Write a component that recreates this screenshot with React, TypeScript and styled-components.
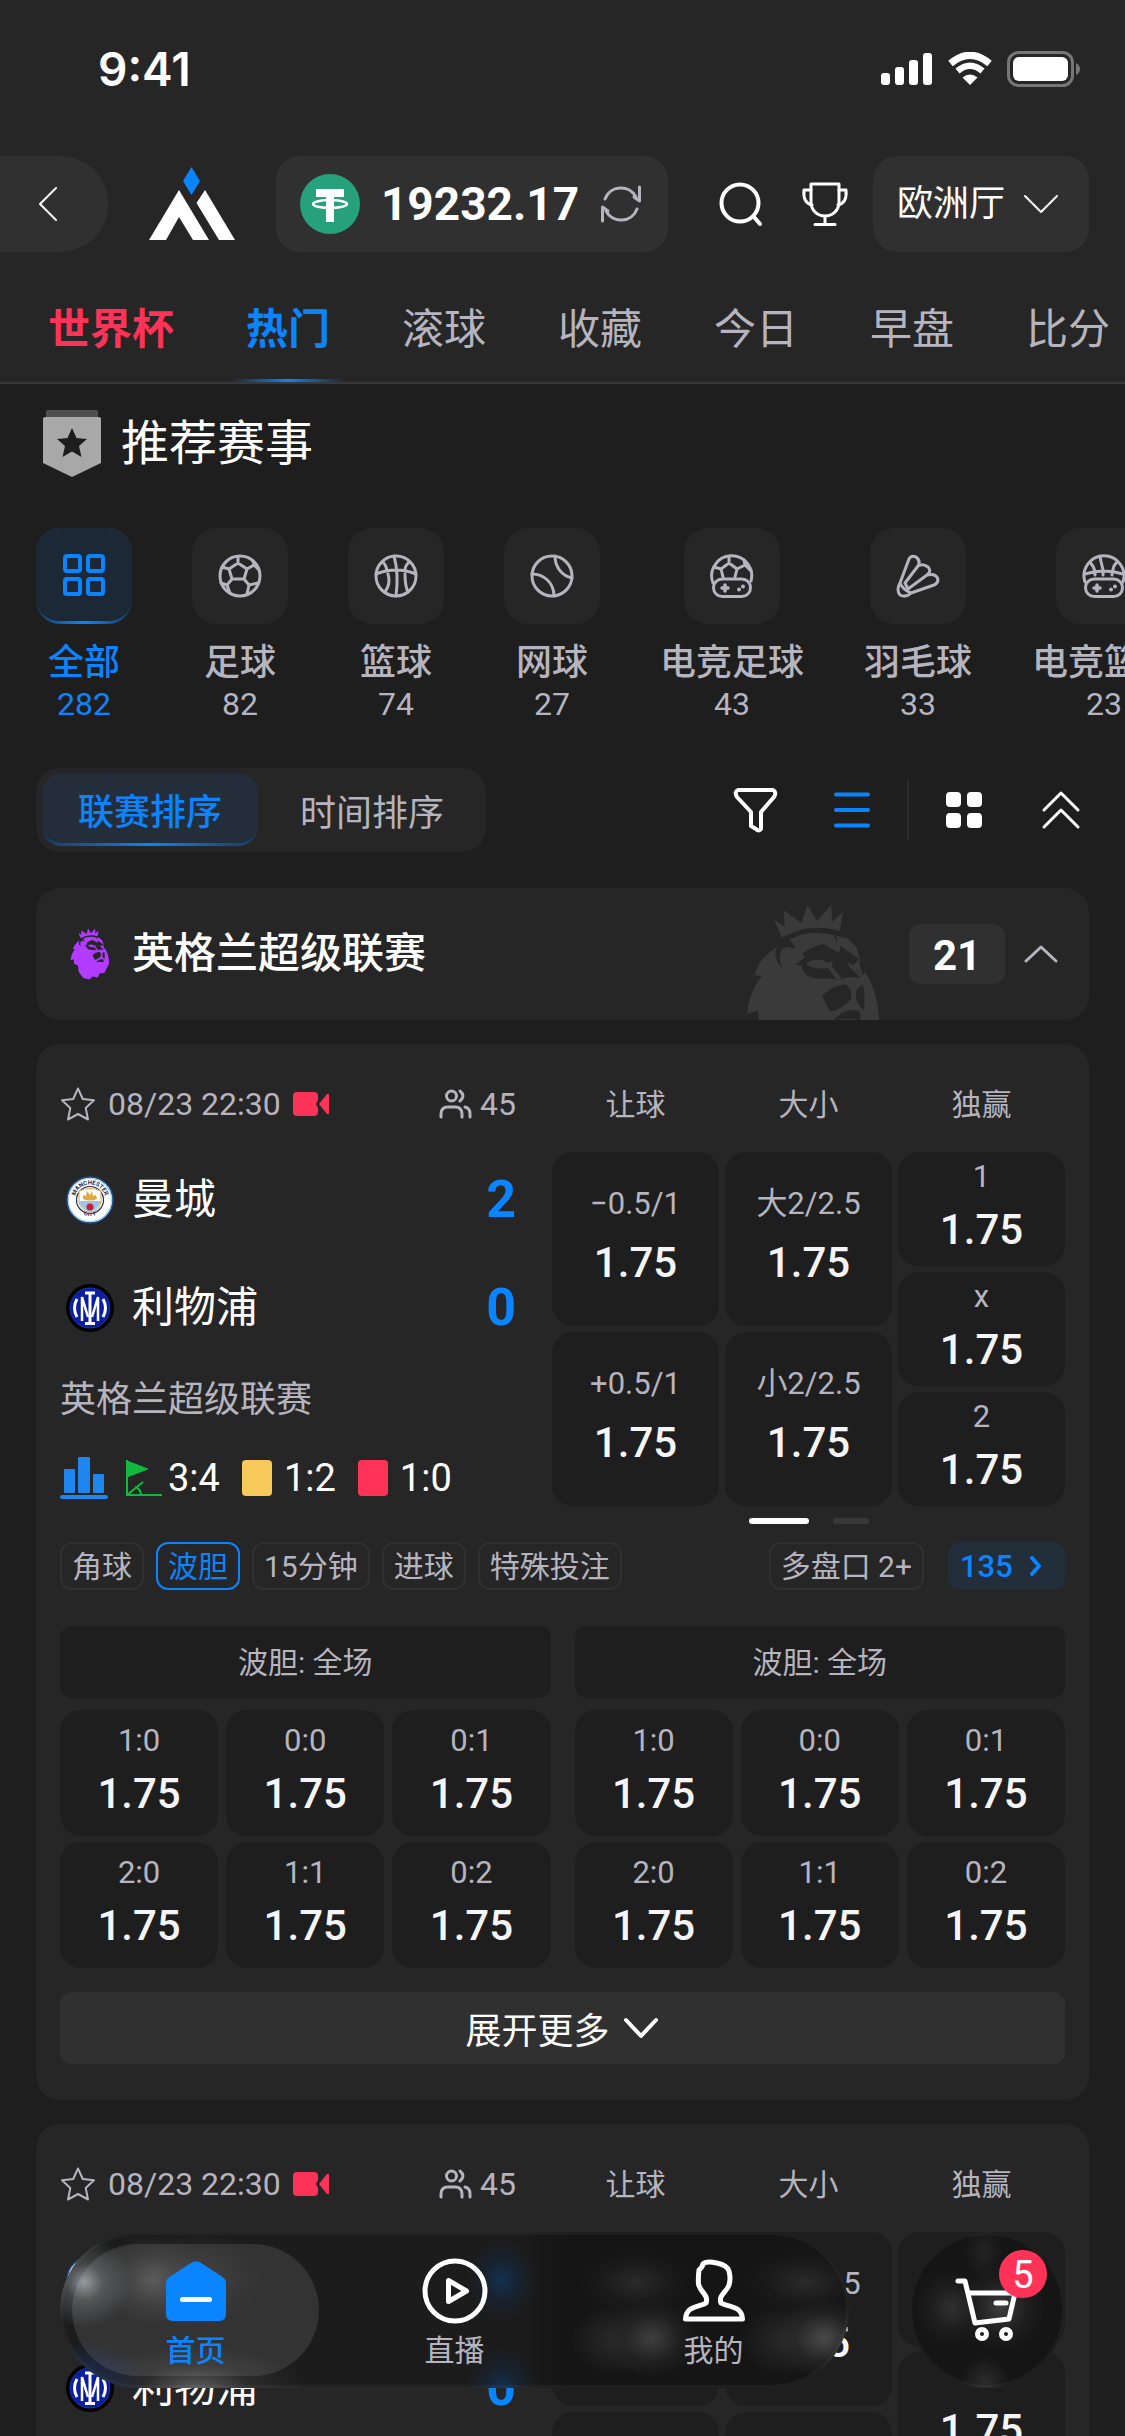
import React, { useState } from "react";
import styled, { createGlobalStyle, css } from "styled-components";

const c = {
  page: "#1e1e1e",
  panel: "#262626",
  raised: "#303030",
  text: "#ffffff",
  value: "#f5f5f7",
  muted: "#b5b4bf",
  blue: "#0a84ff",
  blueTint: "#232e3b",
  red: "#ff3358",
};

const GlobalStyle = createGlobalStyle`
  *, *::before, *::after { box-sizing: border-box; }
  body {
    margin: 0;
    background: ${c.page};
    color: ${c.text};
    font-family: Roboto, "Noto Sans CJK SC", sans-serif;
    font-size: 30px;
  }
  button, select {
    margin: 0;
    padding: 0;
    border: 0;
    background: none;
    color: inherit;
    font: inherit;
    cursor: pointer;
    appearance: none;
  }
  h1, h2, p { margin: 0; }
  svg { display: block; flex: none; }
`;

/* ---------- shell ---------- */

const Shell = styled.div`
  position: relative;
  display: flex;
  flex-direction: column;
  height: 100vh;
  overflow: hidden;
`;

const Header = styled.header`
  flex: none;
  background: ${c.panel};
  border-bottom: 2px solid #383838;
`;

const StatusBar = styled.div`
  display: flex;
  align-items: center;
  justify-content: space-between;
  height: 156px;
  padding: 0 44px 18px 98px;
`;

const Clock = styled.time`
  font-family: Inter, Roboto, sans-serif;
  font-size: 46px;
  font-weight: 600;
`;

const StatusIcons = styled.div`
  display: flex;
  align-items: center;
  gap: 14px;
`;

const TopBar = styled.div`
  display: flex;
  align-items: center;
  height: 96px;
  padding-right: 36px;
`;

const BackButton = styled.button`
  display: flex;
  align-items: center;
  width: 108px;
  height: 96px;
  padding-left: 38px;
  border-radius: 0 48px 48px 0;
  background: ${c.raised};
`;

const LogoLink = styled.a`
  margin: 0 41px;
`;

const Balance = styled.div`
  display: flex;
  align-items: center;
  justify-content: space-between;
  width: 392px;
  height: 96px;
  padding: 0 26px 0 24px;
  border-radius: 24px;
  background: ${c.raised};
  font-size: 46px;
  font-weight: 700;
`;

const Actions = styled.div`
  display: flex;
  align-items: center;
  gap: 36px;
  margin: 0 24px 0 auto;
`;

const IconButton = styled.button<{ $wide?: boolean }>`
  display: grid;
  place-items: center;
  width: ${(p) => (p.$wide ? 84 : 48)}px;
  height: 60px;
`;

const HallPicker = styled.label`
  display: flex;
  align-items: center;
  justify-content: space-between;
  width: 216px;
  height: 96px;
  padding: 0 30px 0 24px;
  border-radius: 24px;
  background: ${c.raised};

  select {
    font-size: 36px;
    color: ${c.text};
    outline: none;
  }
`;

const Tabs = styled.nav`
  display: flex;
  gap: 72px;
  height: 130px;
  padding-left: 48px;
  overflow: hidden;
`;

const Tab = styled.button<{ $tone?: "hot" | "active" }>`
  position: relative;
  flex: none;
  padding-top: 26px;
  font-size: 42px;
  line-height: 60px;
  color: ${c.muted};
  ${(p) => p.$tone === "hot" && css`color: ${c.red}; font-weight: 700;`}
  ${(p) =>
    p.$tone === "active" &&
    css`
      color: ${c.blue};
      font-weight: 700;
      &::after {
        content: "";
        position: absolute;
        left: -14px;
        right: -14px;
        bottom: 0;
        height: 3px;
        background: linear-gradient(90deg, transparent, ${c.blue}, transparent);
      }
    `}
`;

const Main = styled.main`
  flex: 1;
  min-height: 0;
  overflow: hidden;
  padding: 24px 36px 0;
`;

/* ---------- section title and sports ---------- */

const SectionTitle = styled.h1`
  display: flex;
  align-items: center;
  gap: 20px;
  height: 72px;
  padding-left: 7px;
  font-size: 48px;
  font-weight: 400;
  line-height: 60px;
`;

const Sports = styled.nav`
  display: flex;
  gap: 60px;
  margin: 48px -36px 0 0;
  overflow: hidden;
`;

const Sport = styled.button<{ $on?: boolean }>`
  flex: none;
  display: flex;
  flex-direction: column;
  align-items: center;
  min-width: 96px;
  color: ${(p) => (p.$on ? c.blue : c.muted)};
`;

const glowEdge = (fill: string) => css`
  border-bottom: 3px solid transparent;
  background: linear-gradient(${fill}, ${fill}) padding-box,
    linear-gradient(90deg, #1c3a5c, ${c.blue}, #1c3a5c) border-box;
`;

const SportTile = styled.span<{ $on?: boolean }>`
  display: grid;
  place-items: center;
  width: 96px;
  height: 96px;
  border-radius: 24px;
  background: ${c.panel};
  ${(p) => p.$on && glowEdge("#1c2835")}
`;

const SportName = styled.span`
  margin-top: 16px;
  font-size: 36px;
  font-weight: 500;
  line-height: 46px;
  white-space: nowrap;
`;

const SportCount = styled.span`
  font-size: 32px;
  line-height: 36px;
`;

/* ---------- sort bar ---------- */

const SortBar = styled.div`
  display: flex;
  align-items: center;
  justify-content: space-between;
  height: 84px;
  margin-top: 46px;
`;

const Segmented = styled.div`
  display: flex;
  gap: 6px;
  padding: 6px;
  border-radius: 24px;
  background: ${c.panel};
`;

const Segment = styled.button<{ $on: boolean }>`
  height: 72px;
  padding: 0 36px;
  border-radius: 20px;
  font-size: 36px;
  color: ${c.muted};
  ${(p) =>
    p.$on &&
    css`
      ${glowEdge("#242e3a")}
      color: ${c.blue};
      font-weight: 500;
    `}
`;

const ViewTools = styled.div`
  display: flex;
  align-items: center;
  gap: 13px;
  margin-right: -14px;
`;

const Rule = styled.span`
  width: 2px;
  height: 60px;
  background: #2c2c2c;
`;

/* ---------- league bar ---------- */

const LeagueBar = styled.section`
  position: relative;
  display: flex;
  align-items: center;
  height: 132px;
  margin-top: 36px;
  padding: 0 30px 0 34px;
  border-radius: 24px;
  background: ${c.panel};
`;

const LeagueCrest = styled.span`
  margin-right: 22px;
`;

const LeagueName = styled.h2`
  flex: 1;
  font-size: 42px;
  font-weight: 500;
  line-height: 60px;
`;

const Watermark = styled.span`
  margin-right: 19px;
`;

const LeagueCount = styled.span`
  width: 96px;
  height: 60px;
  margin-right: 18px;
  border-radius: 12px;
  background: ${c.raised};
  font-size: 42px;
  font-weight: 700;
  line-height: 64px;
  text-align: center;
`;

/* ---------- match card ---------- */

const Card = styled.article`
  margin-top: 24px;
  padding: 24px 24px 36px;
  border-radius: 24px;
  background: ${c.panel};
`;

const MatchTop = styled.div`
  display: grid;
  grid-template-columns: 456fr 513fr;
  column-gap: 36px;
`;

const Meta = styled.div`
  display: flex;
  align-items: center;
  height: 72px;
  font-size: 32px;
  color: ${c.muted};
`;

const Kickoff = styled.time`
  margin: 0 12px;
`;

const Watching = styled.span`
  display: flex;
  align-items: center;
  gap: 8px;
  margin-left: auto;
`;

const Teams = styled.div`
  padding-top: 6px;
`;

const TeamRow = styled.div`
  display: flex;
  align-items: center;
  gap: 18px;
  height: 108px;
  padding-left: 6px;
  font-size: 42px;
  line-height: 60px;
`;

const Score = styled.strong`
  margin-left: auto;
  color: ${c.blue};
  font-size: 52px;
  font-weight: 700;
`;

const Competition = styled.p`
  font-size: 36px;
  line-height: 76px;
  color: ${c.muted};
`;

const Stats = styled.div`
  display: flex;
  align-items: center;
  gap: 18px;
  height: 80px;
  font-size: 38px;
`;

const Stat = styled.span<{ $gap: number }>`
  display: flex;
  align-items: center;
  gap: ${(p) => p.$gap}px;
  margin-right: 4px;
`;

const PenaltyCard = styled.i<{ $color: string }>`
  width: 30px;
  height: 36px;
  border-radius: 4px;
  background: ${(p) => p.$color};
`;

const Markets = styled.div`
  display: grid;
  grid-template-columns: repeat(3, 1fr);
  gap: 12px 6px;
`;

const MarketName = styled.div`
  height: 72px;
  font-size: 30px;
  line-height: 74px;
  text-align: center;
  color: ${c.muted};
`;

const MarketColumn = styled.div`
  display: flex;
  flex-direction: column;
  gap: 6px;
  height: 354px;
`;

const Odds = styled.button<{ $roomy?: boolean }>`
  flex: 1;
  display: flex;
  flex-direction: column;
  align-items: center;
  justify-content: center;
  gap: ${(p) => (p.$roomy ? 6 : 0)}px;
  width: 100%;
  border-radius: 21px;
  background: ${c.page};
`;

const OddsLabel = styled.span`
  font-size: 31px;
  line-height: 42px;
  color: ${c.muted};
`;

const OddsValue = styled.span`
  font-size: 42px;
  font-weight: 500;
  line-height: 64px;
  color: ${c.value};
`;

const Pager = styled.div`
  grid-column: 1 / -1;
  display: flex;
  justify-content: center;
  gap: 24px;
`;

const Dot = styled.span<{ $on?: boolean }>`
  width: ${(p) => (p.$on ? 60 : 36)}px;
  height: 6px;
  border-radius: 3px;
  background: ${(p) => (p.$on ? c.text : "#383838")};
`;

const Chips = styled.div`
  display: flex;
  gap: 12px;
  margin-top: 18px;
`;

const Chip = styled.button<{ $on?: boolean }>`
  height: 48px;
  padding: 0 10px;
  border: 2px solid ${(p) => (p.$on ? c.blue : c.raised)};
  border-radius: 12px;
  font-size: 30px;
  line-height: 46px;
  white-space: nowrap;
  color: ${(p) => (p.$on ? c.blue : c.muted)};
`;

const MoreChips = styled.div`
  display: flex;
  gap: 24px;
  margin-left: auto;
`;

const MoreLink = styled.a`
  display: flex;
  align-items: center;
  justify-content: space-between;
  width: 117px;
  height: 48px;
  padding: 0 22px 0 12px;
  border-radius: 12px;
  background: ${c.blueTint};
  color: ${c.blue};
  font-size: 31px;
  font-weight: 500;
  text-decoration: none;
`;

const ScoreBoards = styled.div`
  display: grid;
  grid-template-columns: 1fr 1fr;
  gap: 24px;
  margin-top: 36px;
`;

const BoardTitle = styled.div`
  height: 72px;
  margin-bottom: 12px;
  border-radius: 12px;
  background: ${c.page};
  color: ${c.muted};
  font-size: 30px;
  line-height: 74px;
  text-align: center;
`;

const BoardGrid = styled.div`
  display: grid;
  grid-template-columns: repeat(3, 1fr);
  grid-auto-rows: 126px;
  gap: 6px 8px;
`;

const Expand = styled.button`
  display: flex;
  align-items: center;
  justify-content: center;
  gap: 12px;
  width: 100%;
  height: 72px;
  margin-top: 24px;
  border-radius: 12px;
  background: ${c.raised};
  font-size: 36px;
`;

/* ---------- floating navigation ---------- */

const Dock = styled.div`
  position: absolute;
  left: 60px;
  right: 60px;
  bottom: 48px;
  display: flex;
  justify-content: space-between;
`;

const DockNav = styled.nav`
  display: flex;
  gap: 12px;
  flex: 0 1 789px;
  height: 156px;
  padding: 9px;
  border: 3px solid rgba(255, 255, 255, 0.04);
  border-radius: 78px;
  background:
    radial-gradient(48px 46px at 24px 50px, #8a8f94, #5b5f6299 40%, transparent),
    radial-gradient(52px 46px at 92px 48px, #66666699, #44444466 50%, transparent),
    radial-gradient(60px 48px at 140px 46px, #44444466, transparent),
    radial-gradient(60px 40px at 26px 148px, #1d2c4e, transparent),
    radial-gradient(110px 44px at 136px 156px, #5a5a5a, #3c3c3c77 50%, transparent),
    radial-gradient(34px 40px at 442px 48px, #13304f, #14263a88 55%, transparent),
    radial-gradient(34px 40px at 442px 156px, #13304f, #14263a88 55%, transparent),
    radial-gradient(56px 32px at 576px 50px, #2a2a2b, #1f1f2088 60%, transparent),
    radial-gradient(46px 40px at 592px 106px, #3f3f40, #26262799 60%, transparent),
    radial-gradient(46px 36px at 556px 108px, #2a2a2b, transparent),
    radial-gradient(60px 32px at 745px 50px, #2a2a2b, #1f1f2088 60%, transparent),
    radial-gradient(48px 40px at 764px 106px, #4a4a4b, #2a2a2b99 60%, transparent),
    radial-gradient(46px 36px at 726px 108px, #2a2a2b, transparent),
    linear-gradient(90deg, #1c1c1c 58%, #151515 64%);
  background-origin: border-box;
`;

const DockItem = styled.button<{ $on?: boolean }>`
  flex: 1;
  display: flex;
  flex-direction: column;
  align-items: center;
  gap: 6px;
  padding-top: 14px;
  border-radius: 66px;
  font-size: 30px;
  line-height: 42px;
  color: ${(p) => (p.$on ? c.blue : c.muted)};
  font-weight: ${(p) => (p.$on ? 500 : 400)};
  background: ${(p) => (p.$on ? "rgba(255, 255, 255, 0.1)" : "none")};
`;

const DockIcon = styled.span`
  display: grid;
  place-items: center;
  height: 66px;
`;

const CartButton = styled.button`
  position: relative;
  flex: none;
  display: grid;
  place-items: center;
  width: 156px;
  height: 156px;
  border: 3px solid rgba(255, 255, 255, 0.04);
  border-radius: 78px;
  background:
    radial-gradient(36px 40px at 42px 76px, #303030, #22222288 60%, transparent),
    radial-gradient(44px 44px at 92px 76px, #3d3d3d, #26262688 60%, transparent),
    radial-gradient(20px 28px at 75px 20px, #232323, transparent),
    radial-gradient(24px 26px at 76px 150px, #2c2c2c, transparent),
    #151515;
  background-origin: border-box;
`;

const CartBadge = styled.span`
  position: absolute;
  top: 15px;
  right: 15px;
  width: 48px;
  height: 48px;
  border-radius: 24px;
  background: ${c.red};
  color: ${c.text};
  font-size: 38px;
  line-height: 50px;
  text-align: center;
`;

/* ---------- icons ---------- */

type StrokeProps = { w: number; h: number; s?: number; color?: string; children: React.ReactNode };
const Line = ({ w, h, s = 3, color = "currentColor", children }: StrokeProps) => (
  <svg width={w} height={h} viewBox={`0 0 ${w} ${h}`} fill="none" stroke={color} strokeWidth={s} strokeLinecap="round" strokeLinejoin="round" aria-hidden="true">
    {children}
  </svg>
);

const Chevron = ({ w, h, s, up, color }: { w: number; h: number; s: number; up?: boolean; color?: string }) => (
  <Line w={w} h={h} s={s} color={color}>
    <path d={up ? `M${s} ${h - s}L${w / 2} ${s}L${w - s} ${h - s}` : `M${s} ${s}L${w / 2} ${h - s}L${w - s} ${s}`} />
  </Line>
);

const Signal = () => (
  <svg width="52" height="34" viewBox="0 0 52 34" fill="#fff" aria-hidden="true">
    <rect x="0" y="21" width="9" height="12" rx="3" />
    <rect x="14" y="15" width="9" height="18" rx="3" />
    <rect x="28" y="8" width="9" height="25" rx="3" />
    <rect x="42" y="1" width="9" height="32" rx="3" />
  </svg>
);

const Wifi = () => (
  <svg width="46" height="34" viewBox="0 0 46 34" fill="none" aria-hidden="true">
    <path d="M3.500 11.500Q23-5 42.500 11.500" stroke="#fff" strokeWidth="7" />
    <path d="M10.500 19Q23 8.500 35.500 19" stroke="#fff" strokeWidth="6.500" />
    <path d="M15.500 25.500Q23 19.500 30.500 25.500L23 33Z" fill="#fff" />
  </svg>
);

const Battery = () => (
  <svg width="74" height="36" viewBox="0 0 74 36" aria-hidden="true">
    <rect x="1.500" y="1.500" width="64" height="33" rx="10" fill="none" stroke="#777" strokeWidth="3" />
    <rect x="6" y="6" width="55" height="24" rx="6" fill="#fff" />
    <path d="M69 12Q73 14 73 18Q73 22 69 24Z" fill="#777" />
  </svg>
);

const Logo = () => (
  <svg width="86" height="74" viewBox="0 0 86 74" aria-hidden="true">
    <path d="M42.500 0L51 14L42.500 28L34 14Z" fill={c.blue} />
    <path d="M0 73L30 23L60 73H44L30 50L17 73Z M56 23L86 73H70L47.500 36Z" fill="#fff" />
  </svg>
);

const Tether = () => (
  <svg width="60" height="60" viewBox="0 0 60 60" aria-hidden="true">
    <circle cx="30" cy="30" r="30" fill="#26a17b" />
    <path d="M16 15H44V23H34V48H26V23H16Z" fill="#fff" />
    <ellipse cx="30" cy="30" rx="17" ry="4" fill="none" stroke="#fff" strokeWidth="2.500" />
  </svg>
);

const Refresh = () => (
  <Line w={42} h={42} s={3} color={c.muted}>
    <path d="M5 16A17 17 0 0 1 36 14M37 26A17 17 0 0 1 6 28" />
    <path d="M39.500 4V18L34 14M2.500 38V24L8 28" />
  </Line>
);

const Search = () => (
  <Line w={46} h={46} color="#fff" s={4}>
    <circle cx="22" cy="22" r="18.500" />
    <path d="M36 36L42 43" />
  </Line>
);

const Trophy = () => (
  <Line w={48} h={46} color="#fff" s={3}>
    <path d="M10 3H38V21C38 29 32 35 24 35S10 29 10 21ZM24 35V43M14 43.500H34" />
    <path d="M10 9H3C2 19 6 23 11 24M38 9H45C46 19 42 23 37 24" />
  </Line>
);

const RibbonStar = () => (
  <svg width="58" height="68" viewBox="0 0 58 68" aria-hidden="true">
    <path d="M5 0H53Q55 0 55 2V8H3V2Q3 0 5 0Z" fill="#4f4f4f" />
    <path d="M2 7H56Q58 7 58 9V53L29 67L0 53V9Q0 7 2 7Z" fill="#a8a8a8" />
    <path d="M29 18L33.500 28L44 29L36 36L38.500 47L29 41.500L19.500 47L22 36L14 29L24.500 28Z" fill="#1e1e1e" />
  </svg>
);

const Gamepad = () => (
  <>
    <rect x="3.500" y="25" width="37" height="17.500" rx="8.700" />
    <path d="M15 31V37M12 34H18" strokeWidth="3.500" />
    <path d="M29 35.500V35.600M33 32.500V32.600" strokeWidth="4" />
  </>
);

const sportIcons: Record<string, React.ReactNode> = {
  all: (
    <>
      <rect x="3" y="3" width="15" height="15" rx="2" />
      <rect x="26" y="3" width="15" height="15" rx="2" />
      <rect x="3" y="26" width="15" height="15" rx="2" />
      <rect x="26" y="26" width="15" height="15" rx="2" />
    </>
  ),
  soccer: (
    <>
      <circle cx="22" cy="22" r="20" />
      <path d="M20 9L29 15L26 25H14L11 15ZM20 9V3M11 15L4 13M29 15L36 11L35 7M36 11L41 16M26 25L31 31L40 29M31 31L29 40M14 25L9 31L3 29M9 31L12 39" />
    </>
  ),
  basketball: (
    <>
      <circle cx="22" cy="22" r="20" />
      <path d="M2 20Q22 12 42 20M20 2Q25 20 22 42M9 8Q12 11 13 16M35 8Q31 12 31 16M14 20Q17 30 11 38M31 20Q31 32 34 38" />
    </>
  ),
  tennis: (
    <>
      <circle cx="22" cy="22" r="20" />
      <path d="M2 20C13 20 24 28 24 42M25 2C25 13 32 22 42 24" />
    </>
  ),
  esoccer: (
    <>
      <path d="M3 29A20 20 0 1 1 41 27" />
      <path d="M19 9L27 15L25 23M19 9L11 15L13 23M19 9V3M11 15L4 13M27 15L35 11L34 6M35 11L41 17" />
      <Gamepad />
    </>
  ),
  shuttle: (
    <>
      <path d="M4 29L13 5Q15 1 20 3Q25 7 22 12L9 29M22 12Q27 9 32 13Q36 17 31 21L12 35M31 21Q39 19 41.500 24Q43 29 38 31L15 39M4 29Q0 36 4 41Q10 44 15 39Q7 36 4 29ZM9 29L12 35" />
    </>
  ),
  ebasketball: (
    <>
      <path d="M3 28A20 20 0 1 1 41 28" />
      <path d="M3 20Q22 14 41 20M8 8Q12 13 13 17M18 3L21 16M35 8Q31 12 31 16M13 19V21M21 18V21M30 19V21" />
      <Gamepad />
    </>
  ),
};

const Filter = () => (
  <Line w={45} h={46} color="#fff" s={4}>
    <path d="M5 3H40Q44 5 41 10L28 25V42Q26 45 23 42L18 39V25L4 10Q1 5 5 3Z" />
  </Line>
);

const Rows = () => (
  <Line w={40} h={40} color={c.blue} s={4}>
    <path d="M4 4.500H36M4 20H36M4 35.500H36" />
  </Line>
);

const Tiles = () => (
  <svg width="36" height="36" viewBox="0 0 36 36" fill="#fff" aria-hidden="true">
    <rect width="15" height="15" rx="4" />
    <rect x="21" width="15" height="15" rx="4" />
    <rect y="21" width="15" height="15" rx="4" />
    <rect x="21" y="21" width="15" height="15" rx="4" />
  </svg>
);

const CollapseAll = () => (
  <Line w={40} h={40} color="#fff" s={3}>
    <path d="M3 20L20 3L37 20M3 37L20 20L37 37" />
  </Line>
);

const Lion = ({ w, h, box, color }: { w: number; h: number; box: string; color: string }) => (
  <svg width={w} height={h} viewBox={box} aria-hidden="true">
    <g fill={color}>
      <path d="M102 71L134 91L131 43L184 81L202 26L231 74L274 26L276 77L309 47L299 105Q205 78 126 125Z" />
      <path d="M105 155L72 184Q53 207 43 238L66 240Q28 285 21 354L56 343L54 385L98 408L104 470L150 535L215 550L250 520L300 530L320 490L370 480L418 385Q416 290 374 226L371 240L358 208L360 190L349 152L322 127L285 118Q205 96 140 135Z" />
    </g>
    <g fill={c.panel}>
      <path d="M148 131Q110 140 106 168Q106 198 126 215Q114 185 124 163Q140 144 166 160Q162 142 148 131Z" />
      <path d="M165 207L196 182L186 173Q215 152 250 144L298 172L301 150L358 190L350 198L341 207L349 220L371 240L352 246Q325 238 303 250L285 250L262 247Q222 250 204 240Q186 228 184 208Z" />
      <path d="M246 300Q278 268 318 265L333 284V310Q298 346 270 346Z" />
      <path d="M349 281L368 265Q378 300 371 341Q355 330 348 308Z" />
      <path d="M282 372Q312 338 352 343L361 352V372Q320 366 282 372Z" />
      <path d="M280 116L292 140L290 122Z" />
    </g>
    <g fill={color}>
      <path d="M198 203Q228 180 264 200L278 195L276 211L305 246L291 252L263 215Q225 224 198 203Z" />
      <path d="M321 198L340 208L350 197L360 206L357 222L346 221L372 240L364 246L331 217Z" />
    </g>
  </svg>
);

const Star = () => (
  <Line w={36} h={36} s={2}>
    <path d="M18 2.500L22.800 13L34 14.300L25.700 22L28 33.500L18 28L8 33.500L10.300 22L2 14.300L13.200 13Z" />
  </Line>
);

const Camera = () => (
  <svg width="36" height="24" viewBox="0 0 36 24" fill={c.red} aria-hidden="true">
    <path d="M4 0H21Q25 0 25 4V8L23 12L25 16V20Q25 24 21 24H4Q0 24 0 20V4Q0 0 4 0Z" />
    <path d="M34 2Q36 1 36 3V21Q36 23 34 22L26 12Z" />
  </svg>
);

const People = () => (
  <Line w={33} h={30} s={3}>
    <circle cx="12.500" cy="7" r="5" />
    <path d="M2 28V25Q2 18 9 18H16Q23 18 23 25V28M21 2Q27 7 21 12M26 18Q31 19 31 25V28" />
  </Line>
);

const CityCrest = () => (
  <svg width="48" height="48" viewBox="0 0 48 48" role="img" aria-label="Manchester City">
    <circle cx="24" cy="24" r="23" fill="#fff" stroke="#1c4f86" strokeWidth="1.500" />
    <circle cx="24" cy="24" r="21.500" fill="none" stroke="#7fb2de" strokeWidth="0.700" />
    <path id="crest-top" d="M8.500 24A15.500 15.500 0 0 1 39.500 24" fill="none" />
    <path id="crest-bottom" d="M7 24A17.500 17.500 0 0 0 41 24" fill="none" transform="translate(0 2.500)" />
    <text fontSize="6" fontWeight="700" fill="#1c2c5b" textAnchor="middle">
      <textPath href="#crest-top" startOffset="50%">MANCHESTER</textPath>
    </text>
    <text fontSize="6" fontWeight="700" fill="#1c2c5b" textAnchor="middle">
      <textPath href="#crest-bottom" startOffset="50%">CITY</textPath>
    </text>
    <circle cx="24" cy="24" r="13.500" fill="#fff" stroke="#1c2c5b" strokeWidth="1.200" />
    <path d="M13 15Q24 10 35 15V25Q34 34 24 37Q14 34 13 25Z" fill="#fff" stroke="#d9a441" strokeWidth="1" />
    <path d="M13.500 25H34.500Q33 33 24 36.500Q15 33 13.500 25Z" fill="#98c5e9" />
    <path d="M17 23Q24 26 31 23L30 19L27 20L26 15L24 19L21 15L20 20L17 19Z" fill="#e0ab45" />
    <circle cx="24" cy="31" r="3.500" fill="#c8203c" />
  </svg>
);

const InterCrest = () => (
  <svg width="48" height="48" viewBox="0 0 48 48" role="img" aria-label="Inter">
    <circle cx="24" cy="24" r="24" fill="#000" />
    <circle cx="24" cy="24" r="20" fill="#0a1ea0" stroke="#1c35b8" strokeWidth="1" />
    <g fill="none" stroke="#fff" strokeWidth="3">
      <path d="M24 8V40M19 9H29M19 39.500H29" />
      <path d="M16 37V13L22 33M32 37V13L26 33" strokeWidth="2.500" />
      <path d="M11 15Q6 24 11 33M37 15Q42 24 37 33" />
    </g>
  </svg>
);

const BarChart = () => (
  <svg width="48" height="42" viewBox="0 0 48 42" fill="#1f86ee" aria-hidden="true">
    <rect x="4" y="12" width="11" height="24" rx="1" />
    <rect x="18" y="0" width="12" height="36" rx="1" />
    <rect x="33" y="17" width="11" height="19" rx="1" />
    <rect y="38" width="48" height="4" rx="2" />
  </svg>
);

const CornerFlag = () => (
  <svg width="36" height="36" viewBox="0 0 36 36" fill="none" stroke="#10b83e" strokeWidth="2" aria-hidden="true">
    <path d="M1 0V35H36M1 35L17 22M9 27Q15 29 15 35" />
    <path d="M1 1L22 9L1 17Z" fill="#10b83e" strokeWidth="1" />
  </svg>
);

const HomeIcon = () => (
  <svg width="62" height="60" viewBox="0 0 62 60" aria-hidden="true">
    <path d="M26.500 1.500Q31 -1 35.500 1.500L57.500 16Q61 18 61 22V53Q61 60 54 60H8Q1 60 1 53V22Q1 18 4.500 16Z" fill={c.blue} />
    <rect x="15" y="36" width="32" height="5" rx="2.500" fill="#fff" />
  </svg>
);

const LiveIcon = () => (
  <Line w={66} h={66} color="#fff" s={5}>
    <circle cx="33" cy="33" r="30" />
    <path d="M26.500 22.500V43.500L44.500 33Z" />
  </Line>
);

const ProfileIcon = () => (
  <Line w={62} h={64} color="#fff" s={5}>
    <path d="M20 5C24 1 44 4 46 12Q48 20 46 26C44 33 35 36 38 44C44 48 59 46 59.500 60H2.500C3 46 18 48 23 44C26 36 17 33 15.500 25Q15 19 16 11Q19 9 20 5Z" />
  </Line>
);

const CartIcon = () => (
  <Line w={64} h={64} color="#fff" s={5}>
    <path d="M3 3H10L20 45L54 41L60 15H14M41 25H51" />
    <circle cx="27" cy="56" r="4.500" />
    <circle cx="51" cy="56" r="4.500" />
  </Line>
);

/* ---------- data ---------- */

const tabs: { name: string; tone?: "hot" | "active" }[] = [
  { name: "世界杯", tone: "hot" },
  { name: "热门", tone: "active" },
  { name: "滚球" },
  { name: "收藏" },
  { name: "今日" },
  { name: "早盘" },
  { name: "比分" },
];

const sports = [
  { icon: "all", name: "全部", count: 282 },
  { icon: "soccer", name: "足球", count: 82 },
  { icon: "basketball", name: "篮球", count: 74 },
  { icon: "tennis", name: "网球", count: 27 },
  { icon: "esoccer", name: "电竞足球", count: 43 },
  { icon: "shuttle", name: "羽毛球", count: 33 },
  { icon: "ebasketball", name: "电竞篮球", count: 23 },
];

const markets = [
  { name: "让球", picks: ["−0.5/1", "+0.5/1"] },
  { name: "大小", picks: ["大2/2.5", "小2/2.5"] },
  { name: "独赢", picks: ["1", "x", "2"] },
];

const chips = ["角球", "波胆", "15分钟", "进球", "特殊投注"];
const scorelines = ["1:0", "0:0", "0:1", "2:0", "1:1", "0:2"];
const price = "1.75";

/* ---------- match card ---------- */

function OddsCell({ label, roomy }: { label: string; roomy?: boolean }) {
  return (
    <Odds $roomy={roomy}>
      <OddsLabel>{label}</OddsLabel>
      <OddsValue>{price}</OddsValue>
    </Odds>
  );
}

function MatchCard() {
  const [chip, setChip] = useState("波胆");
  return (
    <Card>
      <MatchTop>
        <div>
          <Meta>
            <IconStar />
            <Kickoff>08/23 22:30</Kickoff>
            <Camera />
            <Watching>
              <People />
              45
            </Watching>
          </Meta>
          <Teams>
            <TeamRow>
              <CityCrest />
              曼城
              <Score>2</Score>
            </TeamRow>
            <TeamRow>
              <InterCrest />
              利物浦
              <Score>0</Score>
            </TeamRow>
          </Teams>
          <Competition>英格兰超级联赛</Competition>
          <Stats>
            <BarChart />
            <Stat $gap={6}>
              <CornerFlag />
              3:4
            </Stat>
            <Stat $gap={12}>
              <PenaltyCard $color="#f6c95a" />
              1:2
            </Stat>
            <Stat $gap={12}>
              <PenaltyCard $color={c.red} />
              1:0
            </Stat>
          </Stats>
        </div>
        <Markets>
          {markets.map((m) => (
            <MarketName key={m.name}>{m.name}</MarketName>
          ))}
          {markets.map((m) => (
            <MarketColumn key={m.name}>
              {m.picks.map((p) => (
                <OddsCell key={p} label={p} roomy={m.picks.length === 2} />
              ))}
            </MarketColumn>
          ))}
          <Pager>
            <Dot $on />
            <Dot />
          </Pager>
        </Markets>
      </MatchTop>
      <Chips>
        {chips.map((name) => (
          <Chip key={name} $on={name === chip} onClick={() => setChip(name)}>
            {name}
          </Chip>
        ))}
        <MoreChips>
          <Chip>多盘口 2+</Chip>
          <MoreLink href="#markets">
            135
            <Line w={14} h={22} s={4}>
              <path d="M3 3L10 11L3 19" />
            </Line>
          </MoreLink>
        </MoreChips>
      </Chips>
      <ScoreBoards>
        {[0, 1].map((board) => (
          <div key={board}>
            <BoardTitle>波胆: 全场</BoardTitle>
            <BoardGrid>
              {scorelines.map((s) => (
                <OddsCell key={s} label={s} />
              ))}
            </BoardGrid>
          </div>
        ))}
      </ScoreBoards>
      <Expand>
        展开更多
        <Chevron w={38} h={24} s={4} />
      </Expand>
    </Card>
  );
}

const StarButton = styled.button`
  color: ${c.muted};
`;

function IconStar() {
  const [saved, setSaved] = useState(false);
  return (
    <StarButton aria-label="收藏" aria-pressed={saved} onClick={() => setSaved(!saved)}>
      <Star />
    </StarButton>
  );
}

/* ---------- page ---------- */

export default function App() {
  const [sort, setSort] = useState("联赛排序");
  return (
    <>
      <GlobalStyle />
      <Shell>
        <Header>
          <StatusBar>
            <Clock>9:41</Clock>
            <StatusIcons>
              <Signal />
              <Wifi />
              <Battery />
            </StatusIcons>
          </StatusBar>
          <TopBar>
            <BackButton aria-label="返回">
              <Line w={20} h={36} s={2} color="#fff">
                <path d="M18 2L2 18L18 34" />
              </Line>
            </BackButton>
            <LogoLink href="#home" aria-label="首页">
              <Logo />
            </LogoLink>
            <Balance>
              <Tether />
              19232.17
              <Refresh />
            </Balance>
            <Actions>
              <IconButton aria-label="搜索">
                <Search />
              </IconButton>
              <IconButton aria-label="赛事">
                <Trophy />
              </IconButton>
            </Actions>
            <HallPicker>
              <select aria-label="厅">
                <option>欧洲厅</option>
              </select>
              <Chevron w={36} h={20} s={2} color="#fff" />
            </HallPicker>
          </TopBar>
          <Tabs>
            {tabs.map((t) => (
              <Tab key={t.name} $tone={t.tone}>
                {t.name}
              </Tab>
            ))}
          </Tabs>
        </Header>

        <Main>
          <SectionTitle>
            <RibbonStar />
            推荐赛事
          </SectionTitle>

          <Sports>
            {sports.map((s, i) => (
              <Sport key={s.icon} $on={i === 0}>
                <SportTile $on={i === 0}>
                  <Line w={44} h={44} s={i === 0 ? 4 : 3}>
                    {sportIcons[s.icon]}
                  </Line>
                </SportTile>
                <SportName>{s.name}</SportName>
                <SportCount>{s.count}</SportCount>
              </Sport>
            ))}
          </Sports>

          <SortBar>
            <Segmented>
              {["联赛排序", "时间排序"].map((name) => (
                <Segment key={name} $on={name === sort} onClick={() => setSort(name)}>
                  {name}
                </Segment>
              ))}
            </Segmented>
            <ViewTools>
              <IconButton $wide aria-label="筛选">
                <Filter />
              </IconButton>
              <IconButton $wide aria-label="列表">
                <Rows />
              </IconButton>
              <Rule />
              <IconButton $wide aria-label="网格">
                <Tiles />
              </IconButton>
              <IconButton $wide aria-label="全部收起">
                <CollapseAll />
              </IconButton>
            </ViewTools>
          </SortBar>

          <LeagueBar>
            <LeagueCrest>
              <Lion w={40} h={52} box="15 22 412 532" color="#b23bff" />
            </LeagueCrest>
            <LeagueName>英格兰超级联赛</LeagueName>
            <Watermark>
              <Lion w={150} h={132} box="0 -24 450 396" color="#3a3a3a" />
            </Watermark>
            <LeagueCount>21</LeagueCount>
            <Chevron w={36} h={20} s={3} up color={c.muted} />
          </LeagueBar>

          <MatchCard />
          <MatchCard />
        </Main>

        <Dock>
          <DockNav>
            <DockItem $on>
              <DockIcon>
                <HomeIcon />
              </DockIcon>
              首页
            </DockItem>
            <DockItem>
              <DockIcon>
                <LiveIcon />
              </DockIcon>
              直播
            </DockItem>
            <DockItem>
              <DockIcon>
                <ProfileIcon />
              </DockIcon>
              我的
            </DockItem>
          </DockNav>
          <CartButton aria-label="购物车">
            <CartIcon />
            <CartBadge>5</CartBadge>
          </CartButton>
        </Dock>
      </Shell>
    </>
  );
}
